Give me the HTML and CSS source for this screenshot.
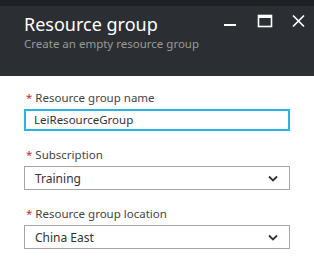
FILE: index.html
```html
<!DOCTYPE html>
<html lang="en">
    <head>
        <meta charset="UTF-8">
        <title>Resource group</title>
        <link rel="stylesheet" href="styles.css">
    </head>
    <body>
        <div class="blade-header">
            <div class="blade-titles">
                <h1>Resource group</h1>
                <p>Create an empty resource group</p>
            </div>
            <div class="blade-controls">
                <svg class="ctl-min" width="12" height="14" viewBox="0 0 12 14"><rect x="0" y="10" width="12" height="2" fill="#fff"/></svg>
                <svg class="ctl-max" width="16" height="14" viewBox="0 0 16 14"><rect x="1.5" y="1.5" width="13" height="11" fill="none" stroke="#fff" stroke-width="1.6"/><rect x="1" y="1" width="14" height="3" fill="#fff"/></svg>
                <svg class="ctl-close" width="13" height="14" viewBox="0 0 13 14"><path d="M1 1.5 L12 12.5 M12 1.5 L1 12.5" stroke="#fff" stroke-width="1.7"/></svg>
            </div>
        </div>

        <!-- Form -->
        <div class="blade-content">
            <div class="field">
                <label><span class="req">*</span> Resource group name</label>
                <div class="textbox">LeiResourceGroup</div>
            </div>
            <div class="field">
                <label><span class="req">*</span> Subscription</label>
                <div class="dropdown">
                    <span>Training</span>
                    <svg width="10" height="7" viewBox="0 0 10 7"><path d="M1 1.5 L5 5.5 L9 1.5" fill="none" stroke="#333" stroke-width="1.8"/></svg>
                </div>
            </div>
            <div class="field">
                <label><span class="req">*</span> Resource group location</label>
                <div class="dropdown">
                    <span>China East</span>
                    <svg width="10" height="7" viewBox="0 0 10 7"><path d="M1 1.5 L5 5.5 L9 1.5" fill="none" stroke="#333" stroke-width="1.8"/></svg>
                </div>
            </div>
        </div>
    </body>
</html>
```
FILE: styles.css
```css
body {
    margin: 0;
    font-family: "Noto Sans", Arial, sans-serif;
    background-color: #fff;
}
.blade-header {
    background-color: #2b2e32;
    border-top: 6px solid #1f2124;
    box-sizing: border-box;
    height: 76px;
    padding: 0 9px 0 24px;
    display: flex;
    justify-content: space-between;
}
.blade-titles h1 {
    margin: 6px 0 0 0;
    font-size: 18px;
    font-weight: normal;
    color: #fff;
    line-height: 24px;
}
.blade-titles p {
    margin: 0;
    font-size: 11.5px;
    color: #9a9a9a;
    line-height: 16px;
}
.blade-controls {
    display: flex;
    align-items: flex-start;
    padding-top: 8px;
}
.ctl-max {
    margin-left: 21px;
}
.ctl-close {
    margin-left: 19px;
}
.blade-content {
    padding: 14px 24px 0 24px;
}
.field {
    margin-bottom: 16px;
}
label {
    display: block;
    font-size: 11.5px;
    color: #444;
    line-height: 16px;
    margin-bottom: 3px;
    padding-left: 2px;
}
.req {
    color: #c0323d;
}
.textbox {
    width: 266px;
    height: 22px;
    box-sizing: border-box;
    border: 2px solid #2ab3e2;
    padding: 0 8px;
    font-size: 11.5px;
    line-height: 18px;
    color: #333;
}
.dropdown {
    width: 266px;
    height: 24px;
    box-sizing: border-box;
    border: 1px solid #a6a6a6;
    padding: 0 11px 0 10px;
    font-size: 12px;
    color: #333;
    display: flex;
    align-items: center;
    justify-content: space-between;
}
```
